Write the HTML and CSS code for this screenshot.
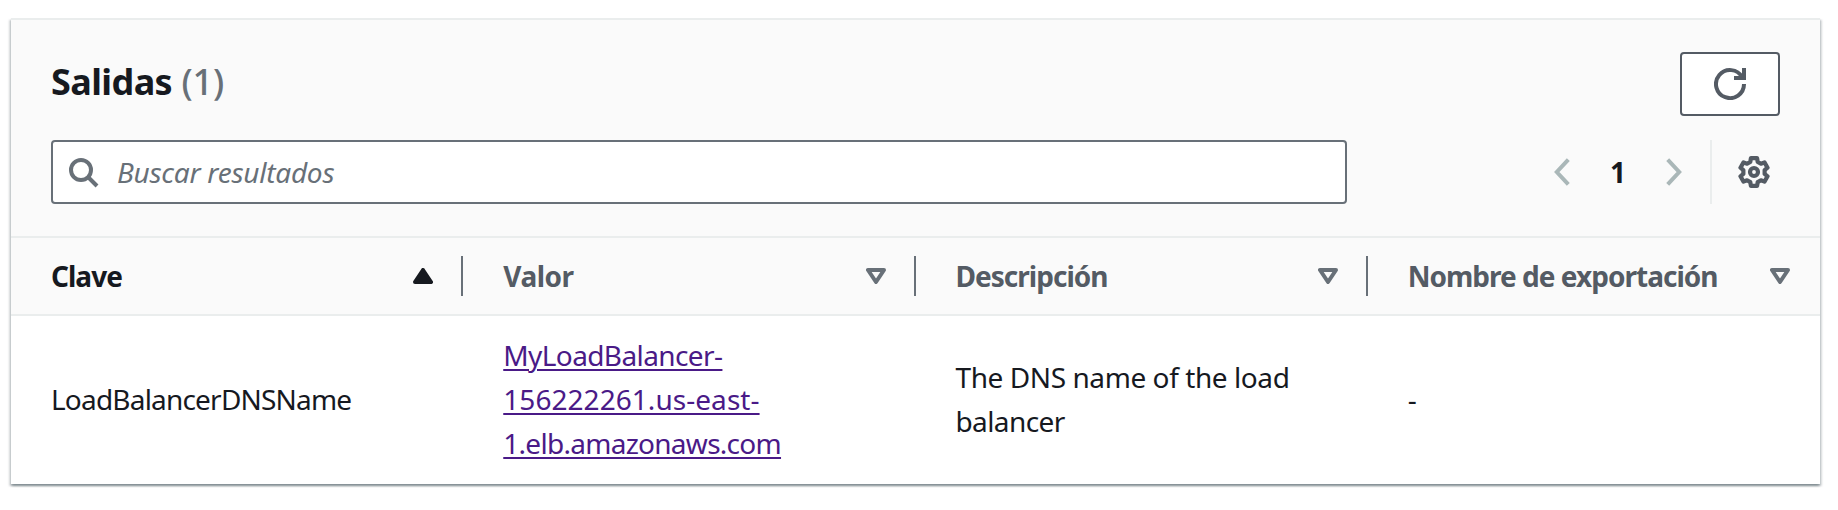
FILE: index.html
```html
<!DOCTYPE html>
<html lang="es">
<head>
<meta charset="utf-8">
<title>Salidas</title>
<link rel="stylesheet" href="styles.css">
</head>
<body>
<section class="panel">
  <header class="panel-header">
    <div class="title-row">
      <h2 class="title"><span class="title-name">Salidas</span> <span class="counter">(1)</span></h2>
      <button class="refresh" aria-label="Actualizar">
        <svg class="icon" viewBox="0 0 16 16"><path d="M10 5h5V0"/><path d="M15 8a7 7 0 1 1-.9-3.4"/></svg>
      </button>
    </div>
    <div class="tools-row">
      <div class="search">
        <svg class="icon" viewBox="0 0 16 16"><circle cx="7" cy="7" r="5"/><path d="M15 15l-4.5-4.5"/></svg>
        <span class="placeholder">Buscar resultados</span>
      </div>
      <div class="tools">
        <svg class="chevron" viewBox="0 0 16 28"><path d="M14.3 1.6L2.8 14l11.5 12.4"/></svg>
        <span class="page">1</span>
        <svg class="chevron" viewBox="0 0 16 28"><path d="M1.7 1.6L13.2 14 1.7 26.4"/></svg>
        <div class="settings">
          <svg class="icon" viewBox="0 0 16 16"><path stroke-linejoin="round" d="M6.46 1.07H9.54L9.85 2.92 11.47 3.86 13.23 3.2 14.77 5.87 13.32 7.06V8.94L14.77 10.13 13.23 12.8 11.47 12.14 9.85 13.08 9.54 14.93H6.46L6.15 13.08 4.53 12.14 2.77 12.8 1.23 10.13 2.68 8.94V7.06L1.23 5.87 2.77 3.2 4.53 3.86 6.15 2.92z"/><circle cx="8" cy="8" r="2"/></svg>
        </div>
      </div>
    </div>
  </header>
  <div class="row head">
    <div class="cell sorted"><span class="label-tight">Clave</span><svg class="sort" viewBox="0 0 20 16"><path class="solid" d="M10 2L18 14H2z"/></svg></div>
    <div class="cell"><span class="label-valor">Valor</span><svg class="sort" viewBox="0 0 20 16"><path d="M2 2H18L10 14z"/></svg></div>
    <div class="cell"><span class="label-tight">Descripción</span><svg class="sort" viewBox="0 0 20 16"><path d="M2 2H18L10 14z"/></svg></div>
    <div class="cell"><span class="label-tight">Nombre de exportación</span><svg class="sort" viewBox="0 0 20 16"><path d="M2 2H18L10 14z"/></svg></div>
  </div>
  <div class="row body">
    <div class="cell key">LoadBalancerDNSName</div>
    <div class="cell"><a class="link" href="#"><span class="host">MyLoadBalancer-</span><br><span class="region">156222261.us-east-</span><br><span class="domain">1.elb.amazonaws.com</span></a></div>
    <div class="cell"><div><span class="desc">The DNS name of the load</span><br><span class="host">balancer</span></div></div>
    <div class="cell">-</div>
  </div>
</section>
</body>
</html>
```
FILE: styles.css
```css
* { box-sizing: border-box; }
body {
  min-height: 510px;
  margin: 0;
  padding: 18px 18px 0 11px;
  background: #fff;
  color: #16191f;
  font: 450 28px/44px "Noto Sans", "Open Sans", sans-serif;
}
.panel {
  width: 1809px;
  height: 466px;
  border-top: 2px solid #eaeded;
  background: #fff;
  box-shadow: 0 2px 2px rgba(0, 28, 36, .3), 2px 2px 2px rgba(0, 28, 36, .15), -2px 2px 2px rgba(0, 28, 36, .15);
}
.icon {
  display: block;
  flex: none;
  width: 32px;
  height: 32px;
  fill: none;
  stroke: currentColor;
  stroke-width: 2;
}
.panel-header {
  height: 216px;
  padding: 32px 40px 0;
  background: #fafafa;
}
.title-row { display: flex; justify-content: space-between; height: 64px; }
.title { margin: 0; padding-top: 8px; font-size: 36px; line-height: 44px; }
.title-name { letter-spacing: -.6px; }
.counter { color: #687078; font-weight: 500; letter-spacing: -.2px; }
.refresh {
  display: flex;
  align-items: center;
  justify-content: center;
  width: 100px;
  height: 64px;
  padding: 0;
  border: 2px solid #545b64;
  border-radius: 4px;
  background: #fff;
  color: #545b64;
}
.tools-row { display: flex; justify-content: space-between; margin-top: 24px; }
.search {
  display: flex;
  align-items: center;
  gap: 18px;
  width: 1296px;
  height: 64px;
  padding-left: 14px;
  border: 2px solid #687078;
  border-radius: 4px;
  background: #fff;
  color: #687078;
}
.placeholder { font-style: italic; letter-spacing: -.25px; }
.tools { display: flex; align-items: center; height: 64px; color: #16191f; }
.chevron { width: 16px; height: 28px; fill: none; stroke: #aab7b8; stroke-width: 4; }
.page { width: 96px; text-align: center; font-weight: 700; }
.settings {
  display: flex;
  align-items: center;
  width: 70px;
  height: 64px;
  margin-left: 28px;
  padding-left: 26px;
  border-left: 2px solid #eaeded;
  color: #545b64;
}
.settings .icon { stroke-width: 2.1; }
.row { display: grid; grid-template-columns: repeat(4, 1fr); }
.cell { display: flex; align-items: center; padding-left: 40px; }
.head {
  height: 80px;
  border-top: 2px solid #eaeded;
  border-bottom: 2px solid #eaeded;
  background: #fafafa;
  color: #545b64;
  font-weight: 700;
}
.head .cell {
  justify-content: space-between;
  height: 40px;
  margin-top: 18px;
  padding-right: 28px;
  border-right: 2px solid #687078;
  white-space: nowrap;
}
.head .cell:last-child { border-right-color: transparent; }
.head .sorted { color: #16191f; }
.sort {
  width: 20px;
  height: 16px;
  fill: none;
  stroke: #687078;
  stroke-width: 4;
  stroke-linejoin: round;
}
.head .solid { fill: #16191f; stroke: #16191f; }
.label-tight { letter-spacing: -.98px; }
.label-valor { letter-spacing: -.5px; }
.body { height: 168px; padding-bottom: 2px; }
.key { letter-spacing: -.8px; }
.link { color: #4a1a87; text-decoration: underline; text-decoration-thickness: 2px; text-underline-offset: 3px; }
.host { letter-spacing: -.6px; }
.region { letter-spacing: .05px; }
.domain { letter-spacing: -.72px; }
.desc { letter-spacing: -.42px; }
```
